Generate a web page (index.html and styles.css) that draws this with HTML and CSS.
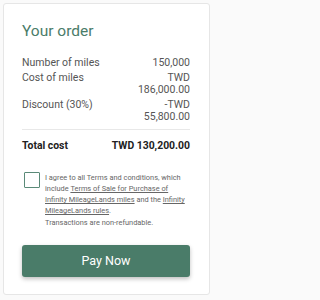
FILE: index.html
```html
<!DOCTYPE html>
<html>
<head>
<meta charset="utf-8">
<link rel="stylesheet" href="styles.css">
</head>
<body>
<div class="card">
  <h1 class="title">Your order</h1>
  <div class="rows">
    <div class="row"><span>Number of miles</span><span class="val">150,000</span></div>
    <div class="row"><span>Cost of miles</span><span class="val">TWD<br>186,000.00</span></div>
    <div class="row"><span>Discount (30%)</span><span class="val">-TWD<br>55,800.00</span></div>
  </div>
  <div class="total"><span>Total cost</span><span>TWD 130,200.00</span></div>
  <div class="agree">
    <span class="check"></span>
    <p class="terms">I agree to all Terms and conditions, which include <a href="#">Terms of Sale for Purchase of</a> <a href="#">Infinity MileageLands miles</a> and the <a href="#">Infinity</a> <a href="#">MileageLands rules</a>.<br>Transactions are non-refundable.</p>
  </div>
  <button class="pay">Pay Now</button>
</div>
</body>
</html>
```

FILE: styles.css
```css
html, body {
  margin: 0;
  padding: 0;
  background: #fafafa;
}
body {
  font-family: Roboto, "Noto Sans", sans-serif;
  padding: 3px;
}
.card {
  box-sizing: border-box;
  max-width: 207px;
  height: 292px;
  background: #fff;
  border: 1px solid #e6e6e6;
  border-radius: 3px;
  padding: 18px 19px 0 18px;
}
.title {
  margin: 0;
  font-size: 15.5px;
  font-weight: 400;
  color: #4a7c69;
  line-height: 18px;
}
.rows {
  margin-top: 17px;
  display: flex;
  flex-direction: column;
  gap: 3px;
  padding-bottom: 5.5px;
  border-bottom: 1px solid #e8e8e8;
}
.row {
  display: flex;
  justify-content: space-between;
  font-size: 10.5px;
  line-height: 12px;
  color: #555;
}
.val {
  text-align: right;
}
.total {
  display: flex;
  justify-content: space-between;
  font-size: 10.4px;
  font-weight: 700;
  color: #222;
  margin-top: 10px;
  line-height: 12px;
}
.agree {
  display: flex;
  gap: 5px;
  margin-top: 20px;
  padding-left: 2px;
}
.check {
  flex: none;
  box-sizing: border-box;
  width: 16px;
  height: 16px;
  border: 1.5px solid #5a8a78;
  border-radius: 1px;
}
.terms {
  margin: 0;
  font-size: 7.4px;
  line-height: 11.3px;
  color: #666;
}
.terms a {
  color: #666;
  text-decoration: underline;
}
.pay {
  display: block;
  width: 100%;
  height: 32px;
  margin-top: 17px;
  border: none;
  border-radius: 3px;
  background: #4a7c69;
  color: #fff;
  font-family: Roboto, sans-serif;
  font-size: 12.5px;
  box-shadow: 0 2px 4px rgba(0,0,0,0.25);
}
```
